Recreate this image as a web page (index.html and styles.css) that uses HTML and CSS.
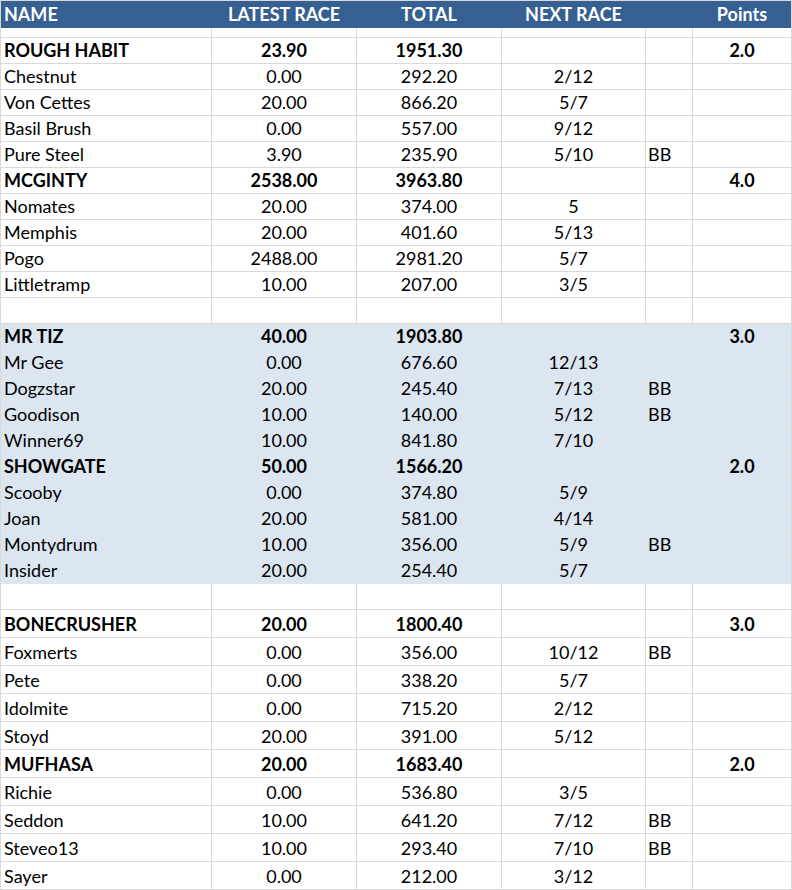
FILE: index.html
```html
<!DOCTYPE html>
<html>
<head>
<meta charset="utf-8">
<link rel="stylesheet" href="styles.css">
</head>
<body>
<div class="sheet">
  <div class="row head">
    <div class="cell l">NAME</div><div class="cell c">LATEST RACE</div><div class="cell c">TOTAL</div><div class="cell c">NEXT RACE</div><div class="cell"></div><div class="cell c">Points</div>
  </div>
  <div class="row thin"><div class="cell"></div><div class="cell"></div><div class="cell"></div><div class="cell"></div><div class="cell"></div><div class="cell"></div></div>

  <div class="row b"><div class="cell l">ROUGH HABIT</div><div class="cell c">23.90</div><div class="cell c">1951.30</div><div class="cell c"></div><div class="cell"></div><div class="cell c">2.0</div></div>
  <div class="row"><div class="cell l">Chestnut</div><div class="cell c">0.00</div><div class="cell c">292.20</div><div class="cell c">2/12</div><div class="cell bb"></div><div class="cell c"></div></div>
  <div class="row"><div class="cell l">Von Cettes</div><div class="cell c">20.00</div><div class="cell c">866.20</div><div class="cell c">5/7</div><div class="cell bb"></div><div class="cell c"></div></div>
  <div class="row"><div class="cell l">Basil Brush</div><div class="cell c">0.00</div><div class="cell c">557.00</div><div class="cell c">9/12</div><div class="cell bb"></div><div class="cell c"></div></div>
  <div class="row"><div class="cell l">Pure Steel</div><div class="cell c">3.90</div><div class="cell c">235.90</div><div class="cell c">5/10</div><div class="cell bb">BB</div><div class="cell c"></div></div>
  <div class="row b"><div class="cell l">MCGINTY</div><div class="cell c">2538.00</div><div class="cell c">3963.80</div><div class="cell c"></div><div class="cell"></div><div class="cell c">4.0</div></div>
  <div class="row"><div class="cell l">Nomates</div><div class="cell c">20.00</div><div class="cell c">374.00</div><div class="cell c">5</div><div class="cell bb"></div><div class="cell c"></div></div>
  <div class="row"><div class="cell l">Memphis</div><div class="cell c">20.00</div><div class="cell c">401.60</div><div class="cell c">5/13</div><div class="cell bb"></div><div class="cell c"></div></div>
  <div class="row"><div class="cell l">Pogo</div><div class="cell c">2488.00</div><div class="cell c">2981.20</div><div class="cell c">5/7</div><div class="cell bb"></div><div class="cell c"></div></div>
  <div class="row"><div class="cell l">Littletramp</div><div class="cell c">10.00</div><div class="cell c">207.00</div><div class="cell c">3/5</div><div class="cell bb"></div><div class="cell c"></div></div>
  <div class="row"><div class="cell"></div><div class="cell"></div><div class="cell"></div><div class="cell"></div><div class="cell"></div><div class="cell"></div></div>

  <div class="row b shade"><div class="cell l">MR TIZ</div><div class="cell c">40.00</div><div class="cell c">1903.80</div><div class="cell c"></div><div class="cell"></div><div class="cell c">3.0</div></div>
  <div class="row shade"><div class="cell l">Mr Gee</div><div class="cell c">0.00</div><div class="cell c">676.60</div><div class="cell c">12/13</div><div class="cell bb"></div><div class="cell c"></div></div>
  <div class="row shade"><div class="cell l">Dogzstar</div><div class="cell c">20.00</div><div class="cell c">245.40</div><div class="cell c">7/13</div><div class="cell bb">BB</div><div class="cell c"></div></div>
  <div class="row shade"><div class="cell l">Goodison</div><div class="cell c">10.00</div><div class="cell c">140.00</div><div class="cell c">5/12</div><div class="cell bb">BB</div><div class="cell c"></div></div>
  <div class="row shade"><div class="cell l">Winner69</div><div class="cell c">10.00</div><div class="cell c">841.80</div><div class="cell c">7/10</div><div class="cell bb"></div><div class="cell c"></div></div>
  <div class="row b shade"><div class="cell l">SHOWGATE</div><div class="cell c">50.00</div><div class="cell c">1566.20</div><div class="cell c"></div><div class="cell"></div><div class="cell c">2.0</div></div>
  <div class="row shade"><div class="cell l">Scooby</div><div class="cell c">0.00</div><div class="cell c">374.80</div><div class="cell c">5/9</div><div class="cell bb"></div><div class="cell c"></div></div>
  <div class="row shade"><div class="cell l">Joan</div><div class="cell c">20.00</div><div class="cell c">581.00</div><div class="cell c">4/14</div><div class="cell bb"></div><div class="cell c"></div></div>
  <div class="row shade"><div class="cell l">Montydrum</div><div class="cell c">10.00</div><div class="cell c">356.00</div><div class="cell c">5/9</div><div class="cell bb">BB</div><div class="cell c"></div></div>
  <div class="row shade"><div class="cell l">Insider</div><div class="cell c">20.00</div><div class="cell c">254.40</div><div class="cell c">5/7</div><div class="cell bb"></div><div class="cell c"></div></div>
  <div class="row"><div class="cell"></div><div class="cell"></div><div class="cell"></div><div class="cell"></div><div class="cell"></div><div class="cell"></div></div>

  <div class="row tall b"><div class="cell l">BONECRUSHER</div><div class="cell c">20.00</div><div class="cell c">1800.40</div><div class="cell c"></div><div class="cell"></div><div class="cell c">3.0</div></div>
  <div class="row tall"><div class="cell l">Foxmerts</div><div class="cell c">0.00</div><div class="cell c">356.00</div><div class="cell c">10/12</div><div class="cell bb">BB</div><div class="cell c"></div></div>
  <div class="row tall"><div class="cell l">Pete</div><div class="cell c">0.00</div><div class="cell c">338.20</div><div class="cell c">5/7</div><div class="cell bb"></div><div class="cell c"></div></div>
  <div class="row tall"><div class="cell l">Idolmite</div><div class="cell c">0.00</div><div class="cell c">715.20</div><div class="cell c">2/12</div><div class="cell bb"></div><div class="cell c"></div></div>
  <div class="row tall"><div class="cell l">Stoyd</div><div class="cell c">20.00</div><div class="cell c">391.00</div><div class="cell c">5/12</div><div class="cell bb"></div><div class="cell c"></div></div>
  <div class="row tall b"><div class="cell l">MUFHASA</div><div class="cell c">20.00</div><div class="cell c">1683.40</div><div class="cell c"></div><div class="cell"></div><div class="cell c">2.0</div></div>
  <div class="row tall"><div class="cell l">Richie</div><div class="cell c">0.00</div><div class="cell c">536.80</div><div class="cell c">3/5</div><div class="cell bb"></div><div class="cell c"></div></div>
  <div class="row tall"><div class="cell l">Seddon</div><div class="cell c">10.00</div><div class="cell c">641.20</div><div class="cell c">7/12</div><div class="cell bb">BB</div><div class="cell c"></div></div>
  <div class="row tall"><div class="cell l">Steveo13</div><div class="cell c">10.00</div><div class="cell c">293.40</div><div class="cell c">7/10</div><div class="cell bb">BB</div><div class="cell c"></div></div>
  <div class="row tall"><div class="cell l">Sayer</div><div class="cell c">0.00</div><div class="cell c">212.00</div><div class="cell c">3/12</div><div class="cell bb"></div><div class="cell c"></div></div>
</div>
</body>
</html>
```

FILE: styles.css
```css
html, body {
  margin: 0;
  padding: 0;
  background: #ffffff;
}

.sheet {
  width: 792px;
  box-sizing: border-box;
  border-top: 1px solid #d9d9d9;
  border-left: 1px solid #d9d9d9;
  font-family: Lato, "Open Sans", sans-serif;
  font-size: 18px;
  color: #000000;
}

.row {
  display: grid;
  grid-template-columns: 211px 145px 145px 144px 47px 99px;
  height: 26px;
}

.row.tall {
  height: 28px;
}

.row.thin {
  height: 10px;
}

.cell {
  box-sizing: border-box;
  border-right: 1px solid #d9d9d9;
  border-bottom: 1px solid #d9d9d9;
  display: flex;
  align-items: flex-end;
  line-height: 18px;
  padding: 0 0 4px 0;
  white-space: nowrap;
  overflow: hidden;
}

.cell.l {
  padding-left: 3px;
}

.cell.c {
  justify-content: center;
}

.cell.bb {
  padding-left: 2px;
}

.row.b .cell {
  font-weight: 700;
}

.row.head {
  height: 27px;
  background: #366092;
  color: #ffffff;
  font-weight: 700;
}

.row.head .cell {
  border-right-color: #366092;
  border-bottom: none;
  padding-bottom: 5px;
}

.row.head .cell:last-child {
  border-right-color: #d9d9d9;
}

.row.shade {
  background: #dce6f1;
}

.row.shade .cell {
  border-right-color: #dce6f1;
  border-bottom-color: #dce6f1;
}

.row.shade .cell:last-child {
  border-right-color: #d9d9d9;
}
```
